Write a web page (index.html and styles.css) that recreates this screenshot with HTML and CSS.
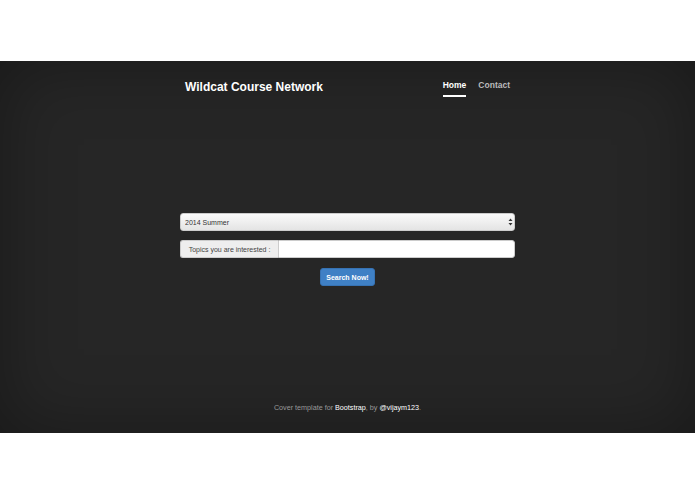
FILE: index.html
```html
<!DOCTYPE html>
<html lang="en">

<head>
  <meta charset="UTF-8">
  <meta name="viewport" content="width=device-width, initial-scale=1.0">
  <title>Wildcat Course Network</title>

  <link rel="stylesheet" href="styles.css">

</head>

<body>

  <div class="site-wrapper">
    <header class="masthead">
      <h3 class="brand">Wildcat Course Network</h3>
      <nav class="nav">
        <a href="#" class="active">Home</a>
        <a href="#">Contact</a>
      </nav>
    </header>

    <section class="cover">
      <form class="search">
        <div class="select-wrap">
          <select class="term">
            <option>2014 Summer</option>
            <option>2014 Fall</option>
            <option>2015 Winter</option>
          </select>
          <svg class="arrows" width="5" height="8" viewBox="0 0 5 8">
            <path d="M2.5 0.5 L4.5 3 L0.5 3 Z" fill="#333" />
            <path d="M2.5 7.5 L4.5 5 L0.5 5 Z" fill="#333" />
          </svg>
        </div>

        <div class="input-group">
          <span class="addon">Topics you are interested :</span>
          <input type="text" class="topics">
        </div>

        <button type="button" class="btn">Search Now!</button>
      </form>
    </section>

    <footer class="mastfoot">
      <p>Cover template for <a href="#">Bootstrap</a>, by <a href="#">@vijaym123</a>.</p>
    </footer>
  </div>

</body>

</html>
```

FILE: styles.css
```css
body {
  margin: 0;
  background: #fff;
  font-family: "Liberation Sans", Arial, sans-serif;
}

.site-wrapper {
  margin-top: 61px;
  height: 372px;
  background: #262626;
  box-shadow: inset 0 0 70px rgba(0, 0, 0, .35);
  color: #fff;
  display: flex;
  flex-direction: column;
  align-items: center;
}

/* top bar */
.masthead {
  width: 325px;
  padding-top: 18px;
  display: flex;
  justify-content: space-between;
  align-items: flex-start;
}

.brand {
  margin: 0;
  font-size: 12px;
  font-weight: bold;
  line-height: 16px;
}

.nav {
  display: flex;
  gap: 12px;
  padding-top: 1px;
}

.nav a {
  color: #bbb;
  font-size: 8.5px;
  font-weight: bold;
  text-decoration: none;
  line-height: 11px;
  padding-bottom: 4px;
  border-bottom: 2px solid transparent;
}

.nav a.active {
  color: #fff;
  border-bottom-color: #fff;
}

/* search form */
.cover {
  flex: 1;
  width: 335px;
  padding-top: 116px;
}

.search {
  display: flex;
  flex-direction: column;
  align-items: center;
}

.select-wrap {
  position: relative;
  width: 100%;
}

.term {
  display: block;
  width: 100%;
  height: 18px;
  margin: 0;
  padding: 0 4px;
  appearance: none;
  border: 1px solid #ccc;
  border-radius: 3px;
  background: linear-gradient(#fafafa, #e4e4e4);
  font-family: inherit;
  font-size: 7px;
  color: #333;
}

.arrows {
  position: absolute;
  right: 2px;
  top: 5px;
}

.input-group {
  display: flex;
  width: 100%;
  height: 18px;
  margin-top: 9px;
}

.addon {
  width: 98px;
  box-sizing: border-box;
  display: flex;
  align-items: center;
  justify-content: center;
  background: #eee;
  border: 1px solid #ccc;
  border-right: 0;
  border-radius: 3px 0 0 3px;
  color: #444;
  font-size: 7px;
}

.topics {
  flex: 1;
  margin: 0;
  padding: 0 4px;
  border: 1px solid #ccc;
  border-radius: 0 3px 3px 0;
  background: #fff;
  font-size: 7px;
}

.btn {
  margin-top: 10px;
  width: 55px;
  height: 18px;
  padding: 0;
  background: #3f80c5;
  border: 1px solid #3672b3;
  border-radius: 3px;
  color: #fff;
  font-family: inherit;
  font-size: 7px;
  font-weight: bold;
}

/* bottom line */
.mastfoot {
  padding-bottom: 21px;
}

.mastfoot p {
  margin: 0;
  color: #999;
  font-size: 7.2px;
}

.mastfoot a {
  color: #fff;
  text-decoration: none;
}
```
